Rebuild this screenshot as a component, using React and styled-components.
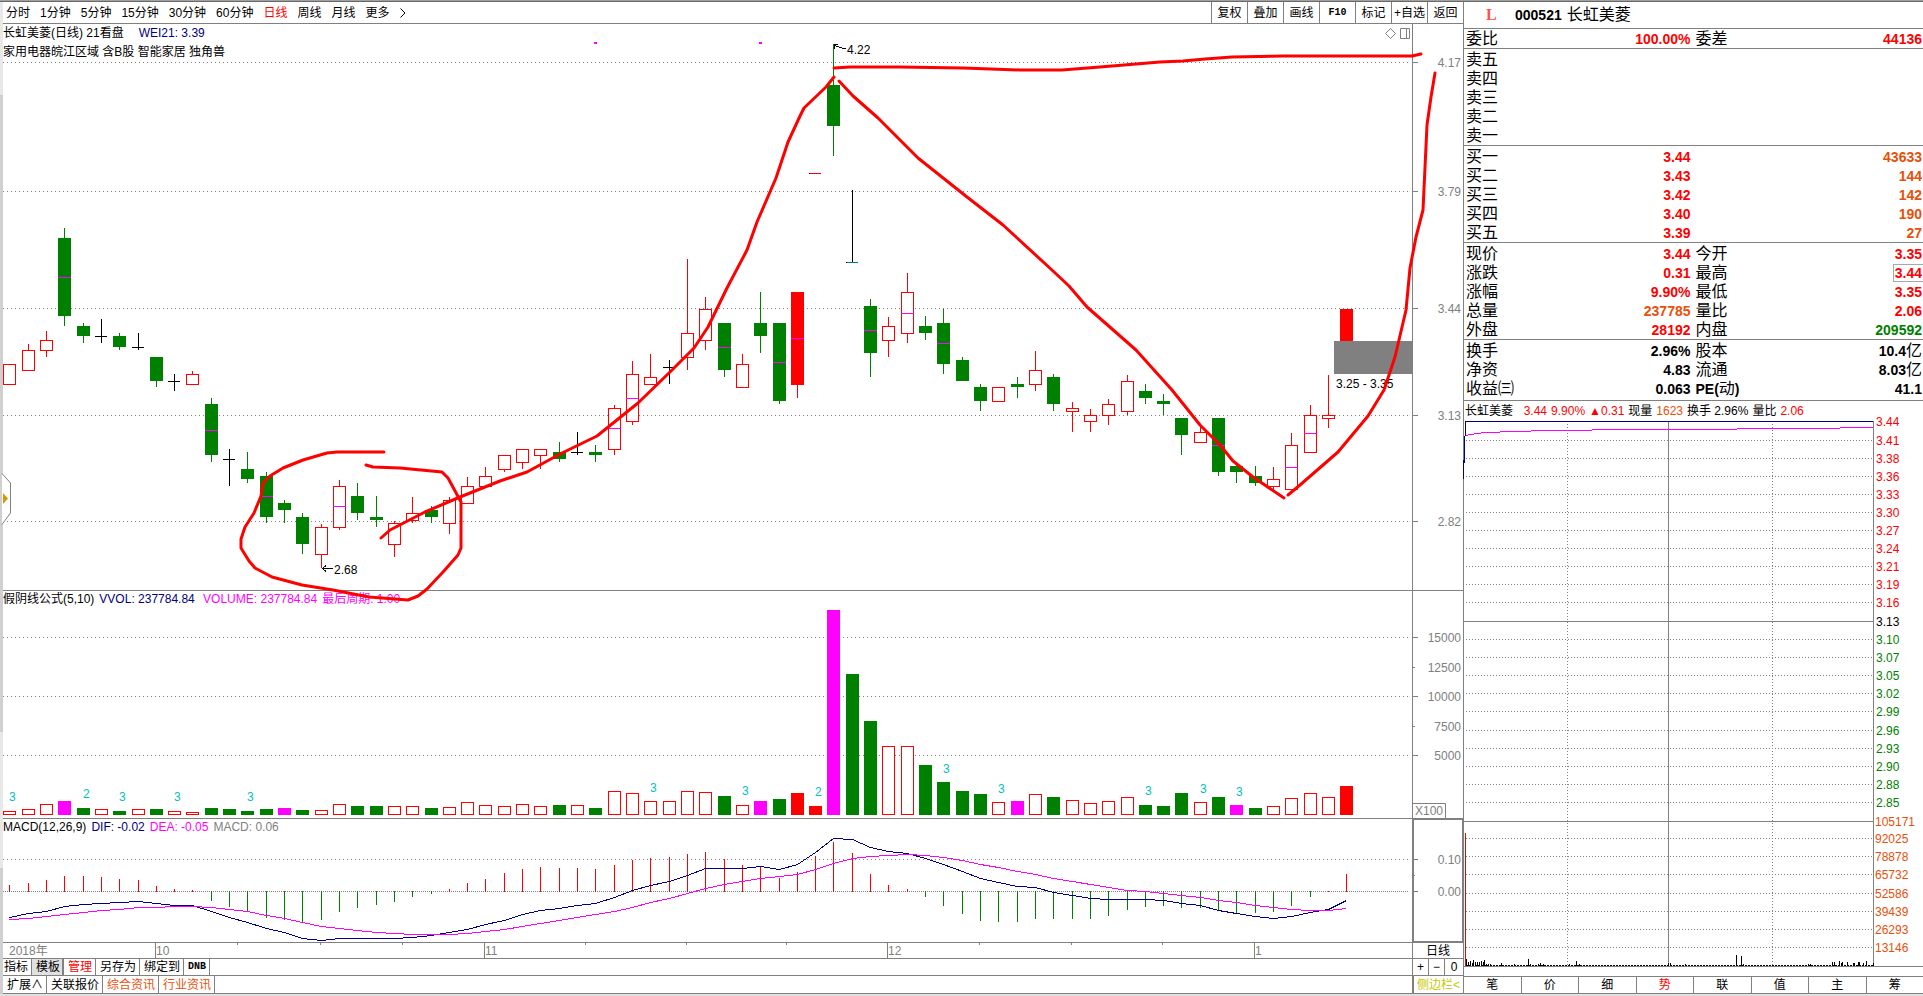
import styled, { createGlobalStyle, css } from 'styled-components';

const GlobalStyle = createGlobalStyle`
  * {
    box-sizing: border-box;
  }
  body {
    margin: 0;
    background: #fff;
    color: #000;
    font-family: 'Liberation Sans', 'Noto Sans CJK SC', sans-serif;
    font-size: 12px;
    line-height: 16px;
  }
`;

const colors = {
  line: '#808080',
  red: '#ff0000',
  green: '#008000',
  navy: '#000080',
  magenta: '#ff00ff',
  orange: '#e8500a',
  cyan: '#00c0c0',
  olive: '#c8c800',
  black: '#000000',
};

/* ---------- layout ---------- */

const Page = styled.div`
  min-width: 1200px;
  border-top: 1px solid #a0a0a0;
  border-bottom: 2px solid #e0e0e0;
`;

const Columns = styled.div`
  display: flex;
  border-top: 1px solid #696969;
`;

const Edge = styled.div`
  width: 3px;
  flex: none;
  background: linear-gradient(
    #e8e8e8 0,
    #e8e8e8 93px,
    #d0d0d0 93px,
    #d0d0d0 730px,
    #e8e8e8 730px,
    #e8e8e8 866px,
    #d0d0d0 866px
  );
`;

const Main = styled.main`
  position: relative;
  flex: 1;
  min-width: 0;
`;

const Side = styled.aside`
  width: 460px;
  flex: none;
  display: flex;
  flex-direction: column;
  border-left: 1px solid ${colors.line};
`;

const Bar = styled.div`
  display: flex;
  height: ${({ $height }) => $height}px;
  border-bottom: 1px solid ${colors.line};
`;

const Spacer = styled.div`
  flex: 1;
`;

/* ---------- toolbar ---------- */

const PlainButton = styled.button`
  border: 0;
  padding: 0;
  background: none;
  font: inherit;
  color: ${({ $color }) => $color || colors.black};
  white-space: nowrap;
  cursor: pointer;
`;

const monoLabel = css`
  font-family: 'Liberation Mono', monospace;
  font-size: 10px;
  font-weight: bold;
`;

const Periods = styled.nav`
  display: flex;
  align-items: center;
  gap: 10px;
  padding-left: 3px;
`;

const Tool = styled(PlainButton)`
  width: 36px;
  border-left: 1px solid ${colors.line};
  ${({ $mono }) => $mono && monoLabel}
`;

/* ---------- chart panes ---------- */

const Pane = styled.section`
  position: relative;
  display: flex;
  height: ${({ $height }) => $height}px;
  border-bottom: 1px solid ${colors.line};
`;

const Plot = styled.svg`
  display: block;
  flex: 1;
  min-width: 0;
  height: 100%;
`;

const Axis = styled.svg`
  display: block;
  flex: none;
  width: 51px;
  height: 100%;
  border: 0 solid ${colors.line};
  border-left-width: 1px;
  ${({ $framed }) =>
    $framed &&
    css`
      border-width: 1px 1px 1px 2px;
    `}
`;

const Legend = styled.div`
  position: absolute;
  top: 0;
  left: 0;
  display: flex;
  gap: 5px;
  line-height: 16px;
  white-space: pre;
`;

const LegendBlock = styled.div`
  position: absolute;
  top: 0;
  left: 0;
  line-height: 19px;
`;

const LegendRow = styled.div`
  display: flex;
  gap: 15px;
`;

const Ink = styled.span`
  color: ${({ $color }) => $color};
`;

const PaneTools = styled.svg`
  position: absolute;
  top: 3px;
  right: 53px;
`;

const Sketch = styled.svg`
  position: absolute;
  inset: 0;
  width: 100%;
  height: 100%;
  overflow: visible;
  pointer-events: none;
`;

const SideHandle = styled.svg`
  position: absolute;
  top: 469px;
  left: -3px;
`;

const AxisCell = styled.div`
  width: 51px;
  flex: none;
  display: flex;
  border-left: 1px solid ${colors.line};
  justify-content: center;
  align-items: center;
`;

const SideToggle = styled(PlainButton)`
  width: 51px;
  border-left: 2px solid ${colors.line};
`;

const Zoom = styled(PlainButton)`
  width: 16px;
  height: 100%;
  &:not(:last-child) {
    border-right: 1px solid ${colors.line};
  }
  &:last-child {
    flex: 1;
  }
`;

const Tab = styled(PlainButton)`
  padding: 0 ${({ $active }) => ($active ? 2 : 3)}px 0
    ${({ $tight }) => ($tight ? 1 : 4)}px;
  border-right: ${({ $active }) => ($active ? 2 : 1)}px solid ${colors.line};
  background: ${({ $active }) => ($active ? '#e0e0e0' : 'none')};
  ${({ $mono }) => $mono && monoLabel}
`;

/* ---------- quote panel ---------- */

const QuoteHeader = styled.header`
  display: flex;
  align-items: center;
  height: 27px;
  padding-left: 22px;
  border-bottom: 1px solid ${colors.line};
  font-size: 16px;
`;

const Flag = styled.span`
  width: 29px;
  color: #ff5050;
  font-family: 'Liberation Serif', serif;
  font-weight: bold;
`;

const Code = styled.strong`
  font-size: 14px;
  margin-right: 5px;
`;

const QuoteTable = styled.table`
  width: 100%;
  table-layout: fixed;
  border-spacing: 0;
  padding: ${({ $pad }) => $pad};
  border-bottom: 1px solid ${colors.line};
`;

const Label = styled.th`
  width: 20%;
  height: 19px;
  padding: 0 0 0 2px;
  text-align: left;
  font-weight: normal;
  font-size: 16px;
  line-height: 18px;
  white-space: nowrap;
`;

const Bold = styled.b`
  font-size: 14px;
`;

const Value = styled.td`
  height: 19px;
  padding: 0 ${({ $last }) => ($last ? 1 : 3)}px 0 0;
  text-align: right;
  font-size: 14px;
  font-weight: bold;
  line-height: 18px;
  white-space: nowrap;
  color: ${({ $color }) => $color || colors.black};
`;

const Unit = styled.span`
  font-size: 16px;
  font-weight: normal;
  line-height: 16px;
`;

const Boxed = styled.span`
  display: inline-block;
  margin-right: -1px;
  padding: 0 1px;
  border: 1px solid #a8a8a8;
  border-right: 0;
  line-height: 16px;
`;

const Ticker = styled.div`
  display: flex;
  gap: 4px;
  height: 20px;
  line-height: 20px;
  padding-left: 1px;
  white-space: pre;
`;

const Intraday = styled.svg`
  display: block;
  width: 100%;
  height: 555px;
  overflow: visible;
`;

const SideTabs = styled.nav`
  display: flex;
  height: 18px;
  border: 1px solid ${colors.line};
  border-width: 1px 0;
`;

const SideTab = styled(PlainButton)`
  flex: 1;
  & + & {
    border-left: 1px solid ${colors.line};
  }
`;

/* ---------- data ---------- */

// g = falling, r = hollow rising, R = limit up, k = doji
// [kind, high, body top, body bottom, low, mid mark]
const candles = [
  ['r', 364, 364, 385, 385], ['r', 344, 350, 371, 371],
  ['r', 331, 340, 351, 357], ['g', 228, 238, 316, 326, 277],
  ['g', 323, 326, 336, 343], ['k', 319, 336, 337, 343],
  ['g', 333, 336, 347, 350], ['k', 333, 347, 348, 350],
  ['g', 357, 357, 381, 387], ['k', 374, 381, 382, 391],
  ['r', 371, 374, 385, 385], ['g', 398, 404, 455, 462, 430],
  ['k', 449, 459, 460, 486], ['g', 452, 469, 479, 483],
  ['g', 472, 476, 517, 523, 496], ['g', 500, 503, 510, 523],
  ['g', 513, 517, 544, 554], ['r', 524, 527, 555, 568],
  ['r', 480, 486, 528, 530, 506], ['g', 483, 496, 513, 520],
  ['g', 496, 517, 520, 527], ['r', 521, 523, 545, 557],
  ['r', 497, 513, 521, 523], ['g', 506, 510, 517, 523],
  ['r', 497, 500, 524, 534], ['r', 477, 486, 504, 504],
  ['r', 467, 476, 487, 487], ['r', 455, 455, 470, 472],
  ['r', 449, 449, 463, 469], ['r', 449, 449, 456, 469],
  ['g', 442, 452, 459, 462], ['k', 432, 452, 453, 455],
  ['g', 445, 452, 455, 462], ['r', 405, 408, 450, 455, 428],
  ['r', 361, 374, 422, 425, 398], ['r', 354, 377, 385, 385],
  ['k', 360, 367, 368, 384], ['r', 259, 333, 358, 370],
  ['r', 297, 309, 341, 350], ['g', 323, 323, 370, 377, 347],
  ['r', 354, 364, 388, 388], ['g', 292, 323, 336, 353],
  ['g', 323, 323, 401, 404, 362], ['R', 292, 292, 385, 398, 338],
  ['d', 173, 173, 174, 174], ['g', 44, 85, 126, 156],
  ['t', 190, 262, 263, 263], ['g', 299, 306, 353, 377, 330],
  ['r', 317, 326, 341, 357], ['r', 273, 292, 334, 343, 313],
  ['g', 316, 326, 333, 340], ['g', 309, 323, 364, 374, 343],
  ['g', 357, 360, 381, 381], ['g', 384, 387, 401, 411],
  ['r', 387, 387, 402, 402], ['g', 377, 384, 387, 398],
  ['r', 351, 370, 385, 391], ['g', 374, 377, 404, 411],
  ['r', 402, 408, 412, 432], ['r', 409, 415, 422, 432],
  ['r', 399, 404, 416, 425], ['r', 375, 381, 412, 415],
  ['g', 384, 391, 398, 404], ['g', 394, 401, 404, 415],
  ['g', 418, 418, 435, 455], ['r', 427, 432, 443, 443],
  ['g', 418, 418, 472, 476, 445], ['g', 463, 466, 472, 483],
  ['g', 466, 476, 483, 486], ['r', 467, 479, 487, 490],
  ['r', 433, 445, 490, 490, 467], ['r', 405, 415, 453, 453, 433],
  ['r', 375, 415, 419, 428], ['R', 309, 309, 341, 341],
];

const volumeTops = [
  811, 809, 804, 801, 808, 809, 811, 809, 809, 811, 812, 808, 809, 811, 809,
  808, 810, 810, 804, 806, 806, 806, 806, 808, 807, 802, 805, 806, 804, 806,
  805, 805, 808, 791, 793, 801, 801, 791, 792, 796, 805, 801, 799, 793, 806,
  610, 674, 721, 746, 746, 765, 782, 791, 794, 802, 801, 794, 797, 800, 803,
  801, 797, 805, 806, 793, 802, 797, 805, 808, 806, 798, 793, 797, 786,
];
const volumeKinds =
  'rrrmgrgrgrrggggmgrrggrrgrrrrrrgrgrrrrrrgrmgRRmggrrggggrmrgrrrrgggrgmgrrrrR';

const counts = [
  [0, 3, 797], [4, 2, 794], [6, 3, 797], [9, 3, 797], [13, 3, 797],
  [35, 3, 788], [40, 3, 791], [44, 2, 792], [51, 3, 769], [54, 3, 789],
  [62, 3, 791], [65, 3, 789], [67, 3, 792],
];

const macd = [
  885, 883, 880, 876, 876, 877, 879, 880, 886, 889, 890, 900, 906, 911, 917,
  919, 922, 919, 911, 907, 904, 901, 896, 893, 889, 883, 879, 873, 869, 867,
  868, 868, 869, 865, 860, 858, 857, 854, 852, 859, 865, 867, 878, 872, 856,
  842, 853, 874, 885, 889, 896, 905, 913, 920, 921, 921, 918, 918, 918, 918,
  915, 909, 906, 905, 907, 907, 910, 912, 912, 911, 905, 896, 891, 874,
];
const dif = [
  917, 913, 911, 906, 904, 903, 902, 901, 903, 905, 905, 911, 917, 922, 928,
  932, 938, 940, 938, 938, 938, 938, 937, 935, 932, 929, 924, 920, 914, 910,
  908, 905, 903, 897, 890, 885, 881, 875, 868, 868, 868, 866, 869, 864, 852,
  838, 839, 847, 851, 853, 858, 864, 871, 878, 882, 886, 887, 892, 895, 898,
  899, 899, 899, 900, 903, 905, 910, 913, 916, 918, 916, 912, 909, 900,
];
const dea = [
  919, 918, 916, 914, 912, 910, 909, 907, 907, 906, 906, 907, 909, 911, 915,
  918, 922, 926, 928, 930, 932, 933, 934, 934, 934, 933, 931, 929, 926, 923,
  920, 917, 914, 911, 907, 902, 898, 893, 888, 884, 881, 878, 876, 874, 869,
  863, 858, 856, 855, 854, 855, 857, 860, 864, 867, 871, 874, 878, 881, 884,
  887, 890, 891, 893, 895, 897, 900, 902, 905, 907, 909, 910, 910, 908,
];

const strokes = [
  '384,452 337,452 327,453 303,460 283,468 270,476 263,483 261,496 254,513 245,527 241,539 241,548 249,561 255,568 272,577 302,585 333,590 369,597 408,600 418,596 427,589 443,572 458,555 461,548 461,502 448,478 442,472 400,468 373,467 366,465',
  '381,538 390,530 425,512 460,497 500,481 527,472 560,454 597,436 638,403 670,372 694,348 708,327 727,288 747,250 757,222 776,178 788,142 794,129 800,116 804,108 826,87 834,77',
  '839,81 853,96 878,118 918,158 967,197 1003,225 1053,271 1069,286 1087,307 1136,350 1172,390 1200,425 1220,445 1233,461 1253,477 1284,498',
  '1288,495 1300,485 1338,452 1368,416 1384,390 1395,357 1406,310 1410,268 1416,237 1423,210 1427,125 1431,97 1435,73',
  '834,68 850,67 900,67 963,68 1020,70 1062,70 1100,67 1160,62 1183,61 1205,59 1232,57 1283,56 1412,56 1421,54',
];

const priceTicks = [
  [62, '4.17'], [191, '3.79'], [308, '3.44'], [415, '3.13'], [521, '2.82'],
];

const periods = [
  '分时', '1分钟', '5分钟', '15分钟', '30分钟', '60分钟', '日线', '周线',
  '月线', '更多',
];
const tools = ['复权', '叠加', '画线', 'F10', '标记', '+自选', '返回'];

const quotes = [
  {
    pad: '0',
    rows: [['委比', '100.00%', 'red', '委差', '44136', 'red']],
  },
  {
    pad: '1px 0 0',
    rows: [['卖五'], ['卖四'], ['卖三'], ['卖二'], ['卖一']],
  },
  {
    pad: '1px 0 0',
    rows: [
      ['买一', '3.44', 'red', '', '43633', 'orange'],
      ['买二', '3.43', 'red', '', '144', 'orange'],
      ['买三', '3.42', 'red', '', '142', 'orange'],
      ['买四', '3.40', 'red', '', '190', 'orange'],
      ['买五', '3.39', 'red', '', '27', 'orange'],
    ],
  },
  {
    pad: '1px 0 0',
    rows: [
      ['现价', '3.44', 'red', '今开', '3.35', 'red'],
      ['涨跌', '0.31', 'red', '最高', '3.44', 'red', 'boxed'],
      ['涨幅', '9.90%', 'red', '最低', '3.35', 'red'],
      ['总量', '237785', 'orange', '量比', '2.06', 'red'],
      ['外盘', '28192', 'red', '内盘', '209592', 'green'],
    ],
  },
  {
    pad: '1px 0 2px',
    rows: [
      ['换手', '2.96%', 'black', '股本', '10.4', 'black', '亿'],
      ['净资', '4.83', 'black', '流通', '8.03', 'black', '亿'],
      ['收益㈢', '0.063', 'black', 'PE(动)', '41.1', 'black'],
    ],
  },
];

const intradayRows = [
  [421, '3.44'], [440, '3.41'], [458, '3.38'], [476, '3.36'], [494, '3.33'],
  [512, '3.30'], [530, '3.27'], [548, '3.24'], [566, '3.21'], [584, '3.19'],
  [602, '3.16'], [621, '3.13'], [639, '3.10'], [657, '3.07'], [675, '3.05'],
  [693, '3.02'], [711, '2.99'], [730, '2.96'], [748, '2.93'], [766, '2.90'],
  [784, '2.88'], [802, '2.85'], [821, '105171'], [838, '92025'],
  [856, '78878'], [874, '65732'], [893, '52586'], [911, '39439'],
  [929, '26293'], [947, '13146'],
];

const trades = [
  [1466, 7], [1468, 4], [1470, 5], [1472, 3], [1473, 6], [1475, 4], [1477, 4],
  [1479, 4], [1481, 5], [1483, 4], [1484, 6], [1486, 2], [1488, 2], [1490, 2],
  [1501, 3], [1514, 2], [1528, 7], [1530, 2], [1538, 2], [1540, 3], [1543, 2],
  [1569, 2], [1576, 5], [1579, 2], [1668, 3], [1670, 3], [1685, 2], [1736, 11],
  [1741, 10], [1743, 2], [1808, 2], [1810, 2], [1832, 4], [1834, 4], [1839, 5],
  [1841, 3], [1842, 4], [1847, 4], [1853, 3], [1854, 3], [1858, 4], [1859, 4],
  [1863, 3], [1866, 5], [1873, 3],
];

/* ---------- drawing helpers ---------- */

const step = 1337 / 73;
const barX = (i) => Math.round(9.3 + i * step);
const fills = { g: 'green', m: 'magenta', R: 'red' };
const path = (values) =>
  values.map((y, i) => `${barX(i) + 0.5},${y + 0.5}`).join(' ');

// Chart coordinates are measured from the window corner.
const Origin = ({ x = 3, y, children }) => (
  <g transform={`translate(${-x} ${-y})`}>{children}</g>
);

const Grid = ({ ys, dash = '1 3', x = 3 }) =>
  ys.map((y) => (
    <line
      key={y}
      x1={x}
      x2="100%"
      y1={y + 0.5}
      y2={y + 0.5}
      stroke={colors.line}
      strokeDasharray={dash}
      shapeRendering="crispEdges"
    />
  ));

const Box = ({ x, top, bottom, color, hollow }) =>
  hollow ? (
    <rect
      x={x - 5.5}
      y={top + 0.5}
      width="12"
      height={Math.max(bottom - top - 1, 2)}
      fill="#fff"
      stroke={color}
    />
  ) : (
    <rect x={x - 6} y={top} width="13" height={bottom - top} fill={color} />
  );

const Candle = ({ i, data }) => {
  const [kind, high, top, bottom, low, mid] = data;
  const x = barX(i);
  const color =
    { g: colors.green, r: colors.red, R: colors.red, d: colors.red }[kind] ||
    colors.black;
  const thin = 'kdt'.includes(kind);
  return (
    <g>
      <rect x={x} y={high} width="1" height={low - high} fill={color} />
      {thin ? (
        <>
          <rect x={x - 6} y={top} width="12" height="1" fill={colors.black} />
          {kind !== 'k' && (
            <rect
              x={x - 5}
              y={top}
              width="11"
              height="1"
              fill={kind === 'd' ? colors.red : '#008080'}
            />
          )}
        </>
      ) : (
        <Box x={x} top={top} bottom={bottom} color={color} hollow={kind === 'r'} />
      )}
      {mid && (
        <rect x={x - 6} y={mid} width="13" height="1" fill={colors.magenta} />
      )}
    </g>
  );
};

const AxisTicks = ({ ticks, minor = [] }) => (
  <>
    {ticks.map(([y, label]) => (
      <g key={label}>
        {!minor.includes(y) && (
          <rect x="1412" y={y} width="6" height="1" fill={colors.line} />
        )}
        <text x="1461" y={y + 5} textAnchor="end" fill={colors.line}>
          {label}
        </text>
      </g>
    ))}
    {minor.map((y) => (
      <rect key={y} x="1412" y={y} width="3" height="1" fill={colors.line} />
    ))}
  </>
);

/* ---------- panes ---------- */

const PricePane = () => (
  <Pane $height={567}>
    <Plot shapeRendering="crispEdges">
      <Origin y={24}>
        <Grid ys={priceTicks.map(([y]) => y)} />
        {candles.map((data, i) => (
          <Candle key={i} i={i} data={data} />
        ))}
        <rect x="594" y="42" width="3" height="2" fill={colors.magenta} />
        <rect x="759" y="42" width="3" height="2" fill={colors.magenta} />
        <rect x="1334" y="341" width="100%" height="33" fill={colors.line} />
        <path
          d="M834.5 45.5L845.5 49M838 44.5H834.5V49M333 568.5H322.5M326 565.5L322.5 568.5L326 571.5"
          fill="none"
          stroke="#000"
        />
        <text x="847" y="54">4.22</text>
        <text x="334" y="574">2.68</text>
        <text x="1336" y="388">3.25 - 3.35</text>
      </Origin>
    </Plot>
    <Axis>
      <Origin x={1413} y={24}>
        <AxisTicks ticks={priceTicks} />
      </Origin>
    </Axis>
    <LegendBlock>
      <LegendRow>
        <span>长虹美菱(日线) 21看盘</span>
        <Ink $color={colors.navy}>WEI21: 3.39</Ink>
      </LegendRow>
      <LegendRow>家用电器皖江区域 含B股 智能家居 独角兽</LegendRow>
    </LegendBlock>
    <PaneTools width="26" height="12" fill="none" stroke={colors.line}>
      <path d="M6.5 1.5L11.5 6.5L6.5 11.5L1.5 6.5Z" />
      <path d="M16.5 1.5H25.5V11.5H16.5ZM22.5 1.5V11.5" />
    </PaneTools>
  </Pane>
);

const VolumePane = () => (
  <Pane $height={228}>
    <Plot shapeRendering="crispEdges">
      <Origin y={591}>
        <Grid ys={[637, 696, 755]} />
        {volumeTops.map((top, i) => (
          <Box
            key={i}
            x={barX(i)}
            top={top}
            bottom={815}
            color={colors[fills[volumeKinds[i]] || 'red']}
            hollow={volumeKinds[i] === 'r'}
          />
        ))}
        {counts.map(([i, n, y]) => (
          <text key={i} x={barX(i)} y={y + 4} fill={colors.cyan}>
            {n}
          </text>
        ))}
      </Origin>
    </Plot>
    <Axis>
      <Origin x={1413} y={591}>
        <AxisTicks
          ticks={[
            [637, '15000'],
            [667, '12500'],
            [696, '10000'],
            [726, '7500'],
            [755, '5000'],
          ]}
          minor={[667, 726]}
        />
        <path d="M1412 803.5H1445.5V819" fill="none" stroke={colors.line} />
        <text x="1415" y="815" fill={colors.line}>
          X100
        </text>
      </Origin>
    </Axis>
    <Legend>
      <span>假阴线公式(5,10)</span>
      <Ink $color={colors.navy}>VVOL: 237784.84 </Ink>
      <Ink $color={colors.magenta}>VOLUME: 237784.84</Ink>
      <Ink $color={colors.magenta}>最后周期: 1.00</Ink>
    </Legend>
  </Pane>
);

const MacdPane = () => (
  <Pane $height={124}>
    <Plot shapeRendering="crispEdges">
      <Origin y={819}>
        <Grid ys={[859]} />
        <Grid ys={[891]} dash="1 1" />
        {macd.map((y, i) => (
          <rect
            key={i}
            x={barX(i)}
            y={Math.min(y, 891)}
            width="1"
            height={Math.abs(y - 891) + 1}
            fill={y > 891 ? colors.green : colors.red}
          />
        ))}
        <polyline points={path(dif)} fill="none" stroke={colors.navy} />
        <polyline points={path(dea)} fill="none" stroke={colors.magenta} />
      </Origin>
    </Plot>
    <Axis $framed>
      <Origin x={1414} y={820}>
        <AxisTicks
          ticks={[
            [859, '0.10'],
            [891, '0.00'],
          ]}
        />
        <rect x="1414" y="875" width="1" height="1" fill={colors.line} />
      </Origin>
    </Axis>
    <Legend>
      <span>MACD(12,26,9)</span>
      <Ink $color={colors.navy}>DIF: -0.02</Ink>
      <Ink $color={colors.magenta}>DEA: -0.05</Ink>
      <Ink $color={colors.line}>MACD: 0.06</Ink>
    </Legend>
  </Pane>
);

const TimeAxis = () => (
  <Bar $height={16}>
    <Plot fill={colors.line}>
      <Origin y={943}>
        <text x="9" y="955">2018年</text>
        {[
          [155, '10'],
          [484, '11'],
          [887, '12'],
          [1254, '1'],
        ].map(([x, label]) => (
          <g key={x}>
            <rect x={x} y="943" width="1" height="16" />
            <text x={x + 1} y="955">
              {label}
            </text>
          </g>
        ))}
        {[237, 320, 402, 585, 686, 786, 979, 1071, 1162].map((x) => (
          <rect key={x} x={x} y="943" width="1" height="2" />
        ))}
      </Origin>
    </Plot>
    <AxisCell>日线</AxisCell>
  </Bar>
);

const BottomTabs = () => (
  <>
    <Bar $height={17}>
      <Tab $tight>指标</Tab>
      <Tab $active>模板</Tab>
      <Tab $color={colors.red}>管理</Tab>
      <Tab>另存为</Tab>
      <Tab>绑定到</Tab>
      <Tab $mono>DNB</Tab>
      <Spacer />
      <AxisCell>
        <Zoom>+</Zoom>
        <Zoom>−</Zoom>
        <Zoom>0</Zoom>
      </AxisCell>
    </Bar>
    <Bar $height={18}>
      <Tab>扩展∧</Tab>
      <Tab>关联报价</Tab>
      <Tab $color={colors.orange}>综合资讯</Tab>
      <Tab $color={colors.orange}>行业资讯</Tab>
      <Spacer />
      <SideToggle $color={colors.olive}>侧边栏&lt;</SideToggle>
    </Bar>
  </>
);

const QuoteGroup = ({ pad, rows }) => (
  <QuoteTable $pad={pad}>
    <tbody>
      {rows.map(([label, value, color, label2, value2, color2, extra]) => (
        <tr key={label}>
          <Label scope="row">{label}</Label>
          <Value $color={colors[color]}>{value}</Value>
          <Label as={label2 ? 'th' : 'td'}>
            {label2 === 'PE(动)' ? (
              <>
                <Bold>PE(</Bold>动<Bold>)</Bold>
              </>
            ) : (
              label2
            )}
          </Label>
          <Value $color={colors[color2]} $last>
            {extra === 'boxed' ? <Boxed>{value2}</Boxed> : value2}
            {extra === '亿' && <Unit>亿</Unit>}
          </Value>
        </tr>
      ))}
    </tbody>
  </QuoteTable>
);

const rowColor = (i) => {
  if (i > 21) return colors.orange;
  if (i > 11) return colors.green;
  return i === 11 ? colors.black : colors.red;
};

const IntradayChart = () => (
  <Intraday shapeRendering="crispEdges">
    <Origin x={1464} y={421}>
      {intradayRows.map(([y, label], i) => (
        <g key={label}>
          {i > 0 && (
            <line
              x1={i === 11 || i === 22 ? 1464 : 1466}
              x2="1873"
              y1={y + 0.5}
              y2={y + 0.5}
              stroke={colors.line}
              strokeDasharray={i === 11 || i === 22 ? undefined : '1 2'}
            />
          )}
          <text x={i > 21 ? 1875 : 1876} y={y + 5} fill={rowColor(i)}>
            {label}
          </text>
        </g>
      ))}
      <path
        d="M1567.5 424V966M1772.5 424V966"
        stroke={colors.line}
        strokeDasharray="1 2"
      />
      <path
        d="M1668.5 421V966M1873.5 421V966M1464 966.5H1923"
        stroke={colors.line}
      />
      <path
        d="M1465 435.5H1468M1468 434.5H1474M1474 433.5H1481M1481 432.5H1500M1500 431.5H1531M1531 430.5H1592M1592 429.5H1737M1737 428.5H1840M1840 427.5H1873"
        stroke={colors.magenta}
      />
      <path
        d="M1873 421.5H1465.5V436M1464.5 436V463M1463.5 460V479"
        fill="none"
        stroke={colors.navy}
      />
      <path d="M1466 965.5H1873" stroke="#000" strokeDasharray="2 1" />
      {trades.map(([x, h]) => (
        <rect key={x} x={x} y={966 - h} width="1" height={h} />
      ))}
      <rect x="1465" y="833" width="1" height="133" fill={colors.red} />
    </Origin>
  </Intraday>
);

const App = () => (
  <Page>
    <GlobalStyle />
    <Columns>
      <Edge />
      <Main>
        <Bar $height={22}>
          <Periods>
            {periods.map((name) => (
              <PlainButton
                key={name}
                $color={name === '日线' ? colors.red : undefined}
              >
                {name}
              </PlainButton>
            ))}
            <svg width="6" height="10" fill="none" stroke="#000">
              <path d="M0.5 0.5L5 5L0.5 9.5" />
            </svg>
          </Periods>
          <Spacer />
          {tools.map((name) => (
            <Tool key={name} $mono={name === 'F10'}>
              {name}
            </Tool>
          ))}
        </Bar>
        <PricePane />
        <VolumePane />
        <MacdPane />
        <TimeAxis />
        <BottomTabs />
        <SideHandle width="12" height="56">
          <path
            d="M2 2.5L10.5 12V42L2 53.5"
            fill="#fff"
            stroke={colors.line}
          />
          <path d="M3 22L8 27.5L3 33Z" fill="#d89800" />
        </SideHandle>
        <Sketch>
          <Origin y={2}>
            {strokes.map((points) => (
              <polyline
                key={points}
                points={points}
                fill="none"
                stroke={colors.red}
                strokeWidth="3"
                strokeLinecap="round"
                strokeLinejoin="round"
              />
            ))}
          </Origin>
        </Sketch>
      </Main>
      <Side>
        <QuoteHeader>
          <Flag>L</Flag>
          <Code>000521</Code>
          长虹美菱
        </QuoteHeader>
        {quotes.map((group) => (
          <QuoteGroup key={group.rows[0][0]} {...group} />
        ))}
        <Ticker>
          <span>长虹美菱 </span>
          <Ink $color={colors.red}> 3.44</Ink>
          <Ink $color={colors.red}>9.90%</Ink>
          <Ink $color={colors.red}>▲0.31</Ink>
          <span>现量</span>
          <Ink $color={colors.orange}>1623</Ink>
          <span>换手 2.96%</span>
          <span>量比</span>
          <Ink $color={colors.red}>2.06</Ink>
        </Ticker>
        <IntradayChart />
        <SideTabs>
          {['笔', '价', '细', '势', '联', '值', '主', '筹'].map((name) => (
            <SideTab
              key={name}
              $color={name === '势' ? colors.red : undefined}
            >
              {name}
            </SideTab>
          ))}
        </SideTabs>
      </Side>
    </Columns>
  </Page>
);

export default App;
